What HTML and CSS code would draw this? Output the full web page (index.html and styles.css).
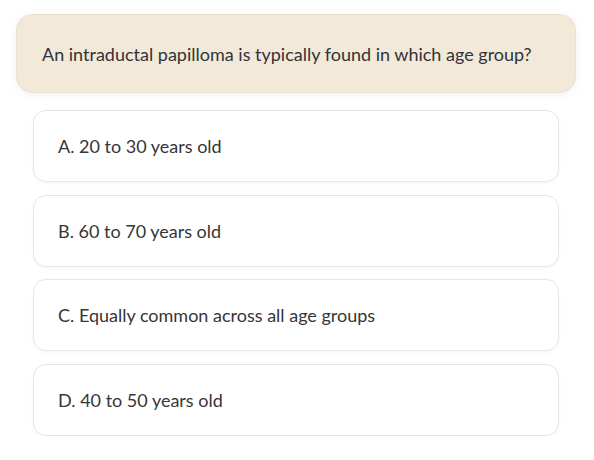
FILE: index.html
```html
<!DOCTYPE html>
<html>
<head>
<meta charset="utf-8">
<link rel="stylesheet" href="styles.css">
</head>
<body>
<div class="quiz">
  <div class="question">An intraductal papilloma is typically found in which age group?</div>
  <div class="options">
    <div class="option">A. 20 to 30 years old</div>
    <div class="option">B. 60 to 70 years old</div>
    <div class="option">C. Equally common across all age groups</div>
    <div class="option">D. 40 to 50 years old</div>
  </div>
</div>
</body>
</html>
```

FILE: styles.css
```css
html, body {
  margin: 0;
  padding: 0;
  background: #ffffff;
}
body {
  font-family: "Lato", "Noto Sans", sans-serif;
  color: #363636;
}
.quiz {
  padding: 14px 18px 0 16px;
  width: 560px;
}
.question {
  background: #f2e9d8;
  border: 1px solid #ebe2d0;
  border-radius: 16px;
  box-sizing: border-box;
  height: 79px;
  padding: 0 25px;
  display: flex;
  align-items: center;
  font-size: 18px;
  color: #33333a;
  box-shadow: 0 2px 10px rgba(0, 0, 0, 0.06);
}
.options {
  display: flex;
  flex-direction: column;
  gap: 12.5px;
  margin: 17px 17px 0 17px;
}
.option {
  background: #fff;
  border: 1px solid #e1e8e8;
  border-radius: 13px;
  height: 72px;
  box-sizing: border-box;
  display: flex;
  align-items: center;
  padding: 0 24px;
  font-size: 18px;
  color: #363636;
  box-shadow: 0 1px 4px rgba(0, 0, 0, 0.04);
}
```
